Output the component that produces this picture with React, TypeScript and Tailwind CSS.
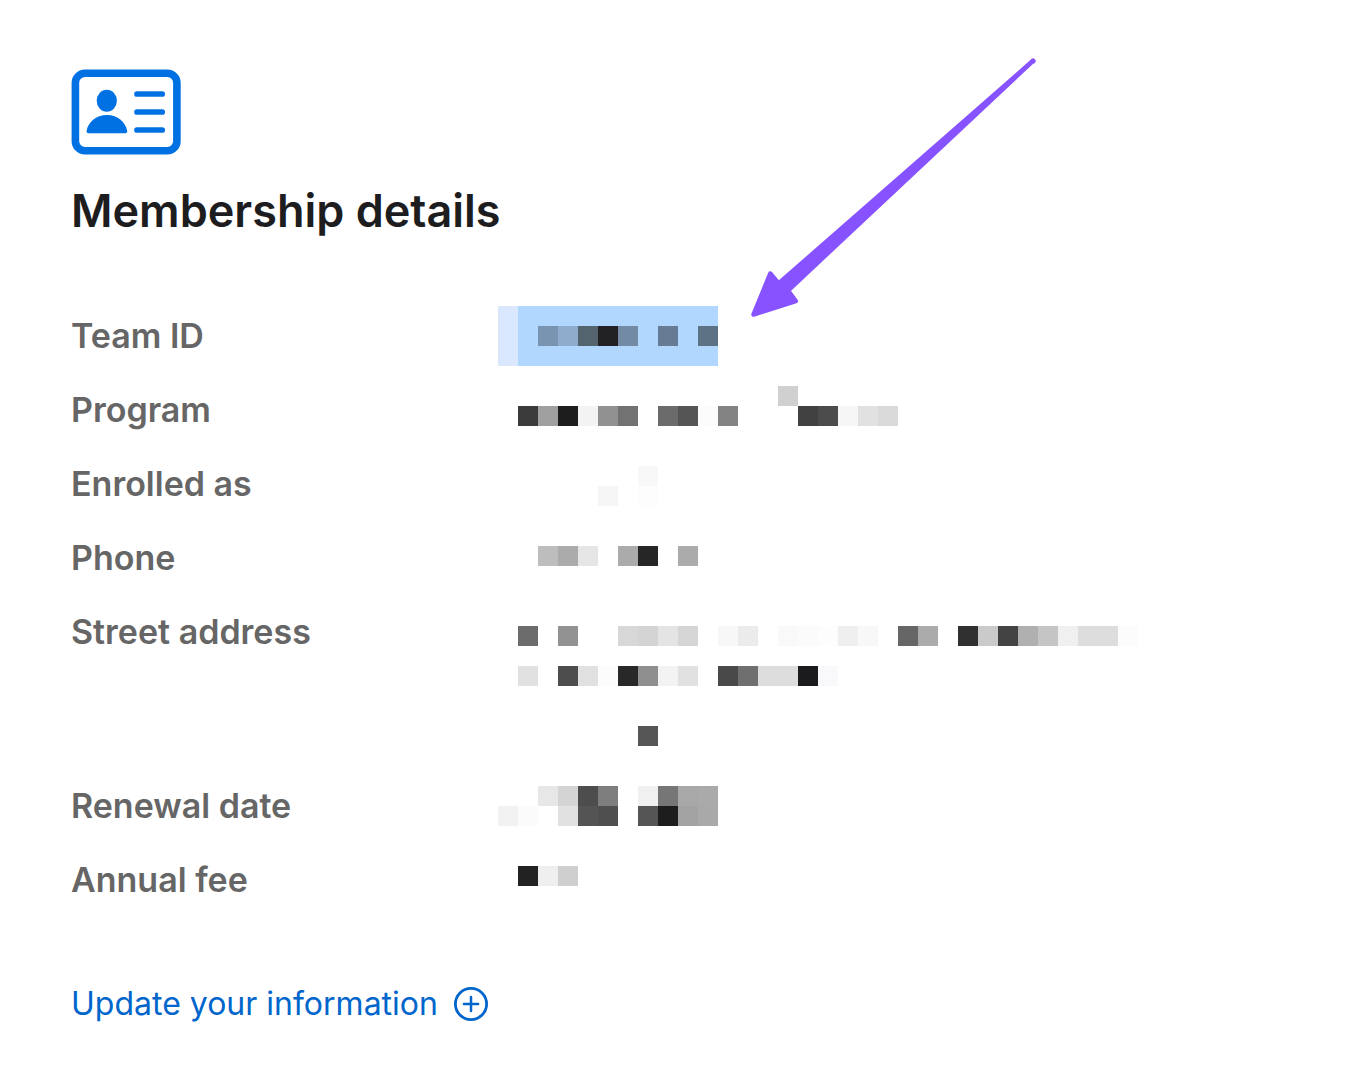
type Cell = [column: number, line: number, color: string];

type Detail = {
  label: string;
  /** Distance from the top of the row to the first line of mosaic cells. */
  top: number;
  lines?: number;
  selected?: boolean;
  cells: Cell[];
};

const CELL = 20;
const LINE_HEIGHT = 50;

const details: Detail[] = [
  {
    label: "Team ID",
    top: -5,
    selected: true,
    cells: [
      [2, 1, "#7994b1"], [3, 1, "#8faccd"], [4, 1, "#54646f"], [5, 1, "#222225"],
      [6, 1, "#738aa5"], [8, 1, "#677b94"], [10, 1, "#5d7285"],
    ],
  },
  {
    label: "Program",
    top: 1,
    cells: [
      [14, 0, "#d0d0d0"],
      [1, 1, "#3b3b3b"], [2, 1, "#a0a0a0"], [3, 1, "#1d1d1d"], [4, 1, "#f3f3f3"],
      [5, 1, "#919191"], [6, 1, "#727272"], [8, 1, "#6b6b6b"], [9, 1, "#555555"],
      [10, 1, "#fcfcfc"], [11, 1, "#838383"], [15, 1, "#414141"], [16, 1, "#4c4c4c"],
      [17, 1, "#f6f6f6"], [18, 1, "#e1e1e1"], [19, 1, "#dadada"],
    ],
  },
  {
    label: "Enrolled as",
    top: 7,
    cells: [[7, 0, "#f8f8f8"], [5, 1, "#f6f6f6"], [7, 1, "#fdfdfd"]],
  },
  {
    label: "Phone",
    top: 13,
    cells: [
      [2, 0, "#bdbdbd"], [3, 0, "#ababab"], [4, 0, "#e6e6e6"], [6, 0, "#ababab"],
      [7, 0, "#262626"], [9, 0, "#ababab"],
    ],
  },
  {
    label: "Street address",
    top: 19,
    lines: 3,
    cells: [
      [1, 0, "#6c6c6c"], [3, 0, "#929292"], [6, 0, "#d8d8d8"], [7, 0, "#d4d4d4"],
      [8, 0, "#e4e4e4"], [9, 0, "#d5d5d5"], [11, 0, "#f7f7f7"], [12, 0, "#ebebeb"],
      [14, 0, "#f9f9f9"], [15, 0, "#fbfbfb"], [16, 0, "#fdfdfd"], [17, 0, "#efefef"],
      [18, 0, "#f8f8f8"], [20, 0, "#666666"], [21, 0, "#ababab"], [23, 0, "#303030"],
      [24, 0, "#cacaca"], [25, 0, "#434343"], [26, 0, "#b0b0b0"], [27, 0, "#c5c5c5"],
      [28, 0, "#f0f0f0"], [29, 0, "#dddddd"], [30, 0, "#dddddd"], [31, 0, "#fcfcfc"],
      [1, 2, "#e1e1e1"], [3, 2, "#4d4d4d"], [4, 2, "#e1e1e1"], [5, 2, "#fcfcfc"],
      [6, 2, "#282828"], [7, 2, "#8f8f8f"], [8, 2, "#f3f3f3"], [9, 2, "#e1e1e1"],
      [11, 2, "#494949"], [12, 2, "#6f6f6f"], [13, 2, "#dddddd"], [14, 2, "#dddddd"],
      [15, 2, "#1b1b1d"], [16, 2, "#f9f9fb"],
      [7, 5, "#565656"],
    ],
  },
  {
    label: "Renewal date",
    top: 5,
    cells: [
      [2, 0, "#e7e7e7"], [3, 0, "#d4d4d4"], [4, 0, "#4d4d4d"], [5, 0, "#7e7e7e"],
      [7, 0, "#f0f0f0"], [8, 0, "#767676"], [9, 0, "#a8a8a8"], [10, 0, "#aaaaaa"],
      [0, 1, "#f2f2f2"], [1, 1, "#fbfbfb"], [3, 1, "#e1e1e1"], [4, 1, "#545454"],
      [5, 1, "#4f4f4f"], [7, 1, "#555555"], [8, 1, "#1d1d1d"], [9, 1, "#a3a3a3"],
      [10, 1, "#a9a9a9"],
    ],
  },
  {
    label: "Annual fee",
    top: 11,
    cells: [[1, 0, "#222222"], [2, 0, "#efefef"], [3, 0, "#cfcfcf"]],
  },
];

function MembershipIcon() {
  return (
    <svg className="block h-[86px] w-[110px]" viewBox="0 0 110 86" fill="none" aria-hidden="true">
      <rect x="4.4" y="4.3" width="101.5" height="77.4" rx="9.5" stroke="#0071e3" strokeWidth="7.6" />
      <ellipse cx="35.8" cy="31.8" rx="10.1" ry="11" fill="#0071e3" />
      <path
        d="M17.4 64.2c-1.3 0-2-.9-1.8-2.2C16.8 53.5 25 46 35.9 46s19.1 7.5 20.3 16c.2 1.3-.5 2.2-1.8 2.2Z"
        fill="#0071e3"
      />
      <path d="M66 25h25.2M66 43h25.2M66 61h25.2" stroke="#0071e3" strokeWidth="5.7" strokeLinecap="round" />
    </svg>
  );
}

function PlusCircleIcon() {
  return (
    <svg className="size-[34px] shrink-0" viewBox="0 0 34 34" fill="none" stroke="currentColor" aria-hidden="true">
      <circle cx="17" cy="17" r="15.6" strokeWidth="2.8" />
      <path d="M17 9.9v14.2M9.9 17h14.2" strokeWidth="2.5" strokeLinecap="round" />
    </svg>
  );
}

function PointerArrow() {
  return (
    <svg
      className="pointer-events-none absolute top-[50px] left-[740px] h-[276px] w-[306px]"
      viewBox="740 50 306 276"
      aria-hidden="true"
    >
      <path
        d="M753.5 314.5 770.3 273.5 778.6 283.5 1033 60.8 788 290.5 795.8 301Z"
        fill="#8752ff"
        stroke="#8752ff"
        strokeWidth="4.5"
        strokeLinejoin="round"
      />
      <circle cx="1033" cy="61" r="2.6" fill="#8752ff" />
    </svg>
  );
}

function Mosaic({ top, lines = 1, selected, cells }: Detail) {
  const height = lines * LINE_HEIGHT;
  return (
    <svg
      className="block overflow-visible"
      width={640}
      height={height}
      viewBox={`0 0 640 ${height}`}
      shapeRendering="crispEdges"
      aria-hidden="true"
    >
      {selected && (
        <>
          <rect x="0" y={top} width="20" height="60" fill="#d9e8fe" />
          <rect x="20" y={top} width="200" height="60" fill="#b1d7fe" />
        </>
      )}
      {cells.map(([column, line, color]) => (
        <rect
          key={`${column}-${line}`}
          x={column * CELL}
          y={top + line * CELL}
          width={CELL}
          height={CELL}
          fill={color}
        />
      ))}
    </svg>
  );
}

export default function App() {
  return (
    <main className="relative min-h-screen overflow-x-hidden bg-white px-[71px] pt-[69px] pb-9 font-['Inter','Liberation_Sans',sans-serif]">
      <MembershipIcon />
      <h1 className="mt-7 text-[45px] leading-14 font-semibold text-[#1d1d1f]">Membership details</h1>

      <dl className="mt-18 flex flex-col gap-6">
        {details.map((detail) => (
          <div key={detail.label} className="grid grid-cols-[427px_1fr]">
            <dt className="text-[34px] leading-[50px] font-semibold text-[#666666]">{detail.label}</dt>
            <dd>
              <Mosaic {...detail} />
            </dd>
          </div>
        ))}
      </dl>

      <a href="#update" className="mt-[74px] inline-flex items-center gap-4 text-[32px] leading-[50px] text-[#0066cc]">
        Update your information
        <PlusCircleIcon />
      </a>

      <PointerArrow />
    </main>
  );
}
